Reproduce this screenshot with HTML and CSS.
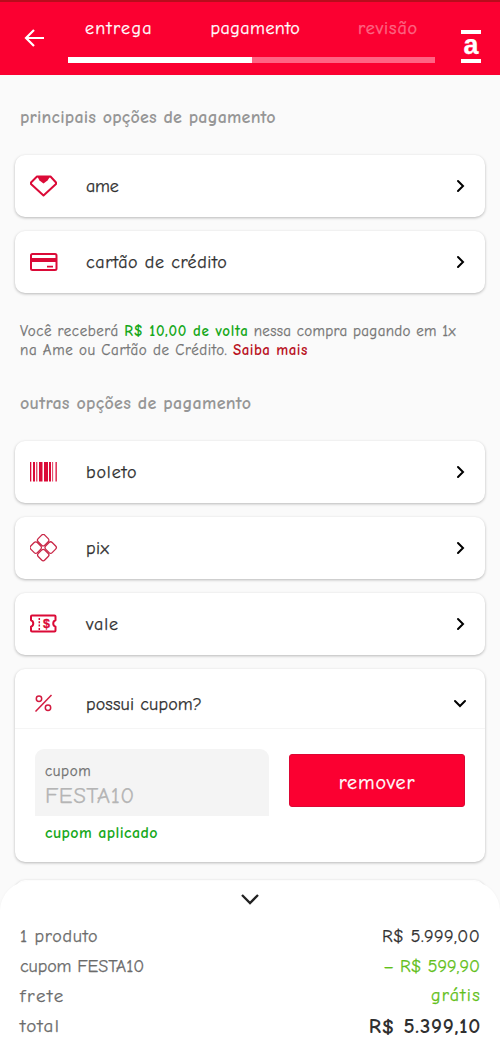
FILE: index.html
```html
<!DOCTYPE html>
<html lang="pt-BR">
<head>
<meta charset="utf-8">
<meta name="viewport" content="width=device-width">
<title>pagamento</title>
<link rel="stylesheet" href="styles.css">
</head>
<body>
<div class="screen">
  <header class="topbar">
    <svg class="back" viewBox="0 0 20 20"><path d="M20 10H2M10 2L2 10l8 8"/></svg>
    <div class="progress">
      <div class="steps"><span class="step-delivery">entrega</span><span class="step-payment">pagamento</span><span class="step-review">revisão</span></div>
      <div class="track"><div class="track-fill"></div></div>
    </div>
    <div class="logo">a</div>
  </header>

  <main>
    <h2 class="title title-main">principais opções de pagamento</h2>
    <div class="list">
      <div class="card">
        <svg class="icon" viewBox="0 0 28 28"><path class="line" d="M7 4.500H20.500L26 10.500V12L13.500 23.500 1 12V10.500Z"/><path class="solid" d="M7 4H20.500L17.500 8.500 13.500 11.500 9.500 8.500Z"/></svg>
        <span class="label l-ame">ame</span>
        <svg class="chevron" viewBox="0 0 14 14"><path d="M5 2l5 5-5 5"/></svg>
      </div>
      <div class="card">
        <svg class="icon" viewBox="0 0 28 28"><rect class="line" x="1" y="6" width="25.500" height="16" rx="1.500"/><path class="solid" d="M1 10h25.500v4H1zM17 17.700h6v1.800h-6z"/></svg>
        <span class="label l-card">cartão de crédito</span>
        <svg class="chevron" viewBox="0 0 14 14"><path d="M5 2l5 5-5 5"/></svg>
      </div>
    </div>
    <p class="note"><span class="note-line n1">Você receberá <b>R$ 10,00 de volta</b><span class="n1-end"> nessa compra pagando em 1x</span></span><span class="note-line n2">na Ame ou Cartão de Crédito. <a>Saiba mais</a></span></p>
    <h2 class="title title-other">outras opções de pagamento</h2>
    <div class="list">
      <div class="card">
        <svg class="icon" viewBox="0 0 28 28"><path class="solid" d="M0 4h1.300v19.500H0zM3 4h2v19.500H3zM6.300 4h1v19.500h-1zM9 4h3.500v19.500H9zM14 4h4v19.500h-4zM19 4h2v19.500h-2zM22.300 4h.8v19.500h-.8zM25.500 4h1.300v19.500h-1.300z"/></svg>
        <span class="label l-boleto">boleto</span>
        <svg class="chevron" viewBox="0 0 14 14"><path d="M5 2l5 5-5 5"/></svg>
      </div>
      <div class="card">
        <svg class="icon" viewBox="0 0 28 28"><g class="thin" transform="translate(13.200 13.600) rotate(45)"><rect x="-9.900" y="-9.900" width="9.300" height="9.300" rx="2.200"/><rect x=".6" y="-9.900" width="9.300" height="9.300" rx="2.200"/><rect x="-9.900" y=".6" width="9.300" height="9.300" rx="2.200"/><rect x=".6" y=".6" width="9.300" height="9.300" rx="2.200"/></g></svg>
        <span class="label l-pix">pix</span>
        <svg class="chevron" viewBox="0 0 14 14"><path d="M5 2l5 5-5 5"/></svg>
      </div>
      <div class="card">
        <svg class="icon" viewBox="0 0 28 28"><path class="line" d="M2 5.500h22.500q1 0 1 1v3.800a3.400 3.400 0 0 0 0 6.400v3.800q0 1-1 1H2q-1 0-1-1v-3.800a3.400 3.400 0 0 0 0-6.400V6.500q0-1 1-1z"/><path class="dash" d="M9.300 8v12"/><text class="money" x="16.500" y="17.800" text-anchor="middle">$</text></svg>
        <span class="label l-vale">vale</span>
        <svg class="chevron" viewBox="0 0 14 14"><path d="M5 2l5 5-5 5"/></svg>
      </div>
      <section class="coupon">
        <div class="coupon-head">
          <svg class="icon" viewBox="0 0 28 28"><g class="percent"><path d="M5.500 22.500L21.500 6"/><circle cx="9" cy="9.700" r="2.700"/><circle cx="18" cy="18.700" r="2.700"/></g></svg>
          <span class="label l-coupon">possui cupom?</span>
          <svg class="chevron" viewBox="0 0 14 14"><path d="M2 5l5 5 5-5"/></svg>
        </div>
        <div class="coupon-body">
          <div class="field-wrap">
            <div class="field"><span class="field-name">cupom</span><span class="field-value">FESTA10</span></div>
            <span class="applied">cupom aplicado</span>
          </div>
          <button class="remove">remover</button>
        </div>
      </section>
      <div class="card card-next"></div>
    </div>
  </main>

  <footer class="summary">
    <svg class="collapse" viewBox="0 0 20 12"><path d="M2 2l8 8 8-8"/></svg>
    <div class="row"><span class="s1">1 produto</span><span class="amount v1">R$ 5.999,00</span></div>
    <div class="row row-coupon"><span class="s2">cupom FESTA10</span><span class="amount green v2">– R$ 599,90</span></div>
    <div class="row"><span class="s3">frete</span><span class="amount green v3">grátis</span></div>
    <div class="row"><span class="s4">total</span><span class="amount strong v4">R$ 5.399,10</span></div>
  </footer>
</div>
</body>
</html>
```
FILE: styles.css
```css
* { box-sizing: border-box; }
body { margin: 0; font-family: "Comic Neue", "Comic Sans MS", Lato, sans-serif; color: #303030; -webkit-text-stroke: .25px; }
.screen { position: relative; width: 500px; height: 1052px; overflow: hidden; background: #fafafa; }
.topbar { display: flex; height: 75px; background: #fb0031; border-top: 2px solid #b80c1c; color: #fff; }
.back { width: 20px; height: 20px; margin: 26px 24px 0; fill: none; stroke: #fff; stroke-width: 2.200; }
.progress { width: 367px; }
.steps { display: flex; height: 55px; padding: 15px 17px 0; justify-content: space-between; font-size: 18px; line-height: 24px; white-space: nowrap; }
.step-delivery { letter-spacing: 1.300px; }
.step-payment { letter-spacing: .45px; }
.step-review { letter-spacing: .9px; opacity: .4; }
.track { height: 6px; background: #ff6384; }
.track-fill { width: 50%; height: 6px; background: #fff; }
.logo { width: 20px; height: 33px; margin: 28px 0 0 26px; border: solid #fff; border-width: 4px 0; font: bold 27px/22px "Liberation Sans", sans-serif; text-align: center; }

.title { margin: 0 20px; font-size: 18px; line-height: 24px; font-weight: 600; color: #969696; white-space: nowrap; -webkit-text-stroke: 0; }
.title-main { padding: 31px 0 25px; letter-spacing: .2px; }
.title-other { padding: 32px 0 25px; letter-spacing: .29px; }
.list { display: flex; flex-direction: column; gap: 14px; padding: 0 15px; }
.card, .coupon { flex: none; background: #fff; border-radius: 10px; box-shadow: 0 1px 3px rgba(0, 0, 0, .27); }
.card { display: flex; align-items: center; height: 62px; padding: 0 18px 0 15px; }
.card-next { margin-top: 4px; }
.icon { width: 28px; height: 28px; margin-right: 28px; }
.line { fill: none; stroke: #db0a37; stroke-width: 2; stroke-linejoin: round; }
.solid { fill: #db0a37; }
.thin { fill: none; stroke: #c92747; stroke-width: 1.300; }
.dash { stroke: #db0a37; stroke-width: 1.500; stroke-dasharray: 2 1.300; }
.money { font: bold 12.500px "Liberation Sans", sans-serif; fill: #db0a37; stroke: #db0a37; stroke-width: .3; }
.percent { fill: none; stroke: #d31b40; stroke-width: 1.500; }
.label { flex: 1; padding-top: 2px; font-size: 18px; line-height: 24px; }
.l-ame { letter-spacing: -.2px; }
.l-card { letter-spacing: .6px; }
.l-boleto { letter-spacing: .85px; }
.l-pix { letter-spacing: .4px; }
.l-vale { letter-spacing: .9px; }
.l-coupon { padding-top: 4px; letter-spacing: .15px; }
.chevron { width: 14px; height: 14px; fill: none; stroke: #000; stroke-width: 2; stroke-linecap: round; }

.note { margin: 29px 20px 0; font-size: 15px; line-height: 19px; color: #757575; white-space: nowrap; }
.note-line { display: block; }
.n1 { letter-spacing: .55px; }
.n1-end { letter-spacing: .33px; }
.n2 { letter-spacing: .6px; }
.note b, .note a { font-weight: 600; -webkit-text-stroke: 0; }
.note b { letter-spacing: .65px; color: #17a81b; }
.note a { letter-spacing: .5px; color: #b9131f; }

.coupon { height: 193px; }
.coupon-head { display: flex; align-items: center; height: 60px; padding: 8px 18px 0 15px; border-bottom: 1px solid #f5f5f5; }
.coupon-body { display: flex; gap: 20px; padding: 20px; }
.field-wrap { width: 234px; }
.field { display: flex; flex-direction: column; height: 67px; padding: 12px 10px; background: #f4f4f4; border-radius: 9px 9px 0 0; }
.field-name { font-size: 15px; line-height: 20px; letter-spacing: .6px; color: #707070; }
.field-value { font-size: 23px; line-height: 29px; letter-spacing: .5px; color: #b5b5b5; }
.applied { display: block; padding: 7px 10px; font-size: 16px; line-height: 20px; font-weight: 600; letter-spacing: .4px; color: #17a81b; -webkit-text-stroke: 0; }
.remove { width: 176px; height: 53px; margin-top: 5px; padding: 4px 0 0; border: 1px solid #dc0734; border-radius: 3px; background: #fb0031; color: #fff; font-family: inherit; font-size: 20px; letter-spacing: .9px; -webkit-text-stroke: .25px; }

.summary { position: absolute; left: 0; right: 0; bottom: 0; height: 171px; padding: 12px 20px 0; background: #fff; border-radius: 30px 30px 0 0; box-shadow: 0 0 3px rgba(0, 0, 0, .04); }
.collapse { display: block; width: 20px; height: 12px; margin: 0 auto 17px; fill: none; stroke: #222; stroke-width: 2.300; }
.row { display: flex; justify-content: space-between; height: 30px; font-size: 18px; line-height: 30px; color: #6b6b6b; }
.row-coupon { height: 29px; }
.s1 { letter-spacing: .7px; }
.s2 { letter-spacing: -.1px; }
.s3 { font-size: 19px; letter-spacing: 1.700px; }
.s4 { font-size: 19px; letter-spacing: 1.300px; }
.amount { color: #303030; }
.green { color: #62c01a; }
.strong { font-size: 21px; font-weight: 600; -webkit-text-stroke: 0; }
.v1 { letter-spacing: .4px; }
.v3 { margin-right: -1px; letter-spacing: 1.300px; }
.v4 { margin-right: -1px; letter-spacing: .75px; }
```
